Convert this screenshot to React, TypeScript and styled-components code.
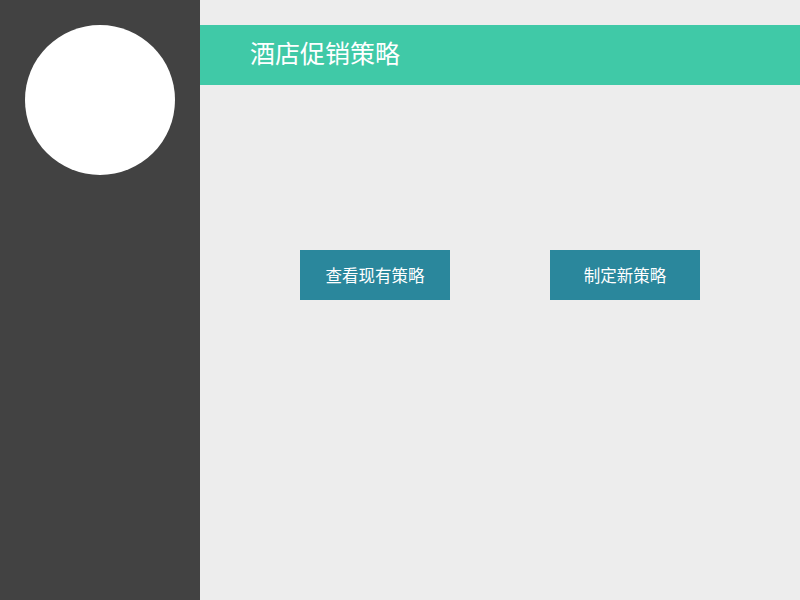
import React from "react";
import styled, { createGlobalStyle } from "styled-components";

const GlobalStyle = createGlobalStyle`
  html, body {
    margin: 0;
    padding: 0;
    height: 100%;
  }
  body {
    font-family: "Noto Sans CJK SC", "Noto Sans", sans-serif;
    background: #ededed;
  }
  #root {
    height: 100%;
  }
`;

const Page = styled.div`
  display: flex;
  width: 800px;
  height: 600px;
  overflow: hidden;
`;

const Sidebar = styled.aside`
  width: 200px;
  flex-shrink: 0;
  background: #424242;
  padding: 25px;
  box-sizing: border-box;
`;

const Avatar = styled.div`
  width: 150px;
  height: 150px;
  border-radius: 50%;
  background: #ffffff;
`;

const Main = styled.main`
  flex: 1;
  background: #ededed;
  padding-top: 25px;
`;

const Header = styled.header`
  height: 60px;
  box-sizing: border-box;
  background: #40c9a7;
  display: flex;
  align-items: center;
  padding: 0 0 5px 50px;
`;

const Title = styled.h1`
  margin: 0;
  font-size: 25px;
  line-height: 1;
  font-weight: 400;
  color: #ffffff;
`;

const Actions = styled.div`
  display: flex;
  gap: 100px;
  padding: 165px 0 0 100px;
`;

const ActionButton = styled.button`
  width: 150px;
  height: 50px;
  padding: 0;
  border: none;
  background: #2a879c;
  color: #ffffff;
  font-family: "Noto Sans CJK SC", "Noto Sans", sans-serif;
  font-size: 16.5px;
  cursor: pointer;
`;

export default function App() {
  return (
    <>
      <GlobalStyle />
      <Page>
        <Sidebar>
          <Avatar />
        </Sidebar>
        <Main>
          <Header>
            <Title>酒店促销策略</Title>
          </Header>
          <Actions>
            <ActionButton>查看现有策略</ActionButton>
            <ActionButton>制定新策略</ActionButton>
          </Actions>
        </Main>
      </Page>
    </>
  );
}
